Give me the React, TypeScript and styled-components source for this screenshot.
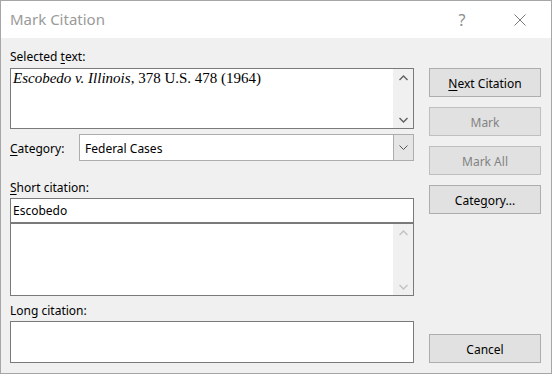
import styled, { createGlobalStyle } from 'styled-components'

const GlobalStyle = createGlobalStyle`
  html, body {
    margin: 0;
    padding: 0;
    background: #ffffff;
  }
  * {
    box-sizing: border-box;
  }
`

const Window = styled.div`
  width: 552px;
  height: 374px;
  border: 1px solid #a6a6a6;
  display: flex;
  flex-direction: column;
  font-family: "Noto Sans", "Open Sans", sans-serif;
  font-size: 12px;
  color: #000;
  overflow: hidden;
`

const TitleBar = styled.div`
  height: 37px;
  flex: none;
  background: #fff;
  display: flex;
  align-items: center;
  padding-left: 9px;
`

const Title = styled.div`
  flex: 1;
  font-size: 15px;
  color: #9a9a9a;
  line-height: 20px;
  margin-top: -2px;
`

const TitleButton = styled.div<{ $w: number }>`
  width: ${p => p.$w}px;
  height: 37px;
  display: flex;
  align-items: center;
  justify-content: center;
  color: #8c8c8c;
  font-size: 16px;
`

const Body = styled.div`
  flex: 1;
  background: #f0f0f0;
  display: flex;
  padding: 0 10px 10px 9px;
  gap: 15px;
`

const LeftCol = styled.div`
  width: 404px;
  display: flex;
  flex-direction: column;
`

const RightCol = styled.div`
  width: 112px;
  display: flex;
  flex-direction: column;
  padding-top: 30px;
  gap: 10px;
`

const Label = styled.div<{ $mt: number }>`
  height: 16px;
  line-height: 19px;
  margin-top: ${p => p.$mt}px;
  white-space: nowrap;
`

const Key = styled.span`
  text-decoration: underline;
  text-underline-offset: 2px;
`

const Box = styled.div<{ $h: number; $mt: number }>`
  height: ${p => p.$h}px;
  margin-top: ${p => p.$mt}px;
  background: #fff;
  border: 1px solid #7a7a7a;
  display: flex;
  flex: none;
`

const BoxText = styled.div`
  flex: 1;
  padding: 2px 2px 0;
  line-height: 20px;
`

const CiteText = styled.div`
  flex: 1;
  padding: 0 2px;
  font-family: "Liberation Serif", "DejaVu Serif", serif;
  font-size: 15px;
  line-height: 19px;
  white-space: nowrap;
`

const Scroll = styled.div<{ $disabled?: boolean }>`
  width: 20px;
  flex: none;
  background: #f0f0f0;
  display: flex;
  flex-direction: column;
  justify-content: space-between;
  align-items: center;
  padding: 6px 0 5px;
  color: ${p => (p.$disabled ? '#c2c2c2' : '#606060')};
`

const CategoryRow = styled.div`
  display: flex;
  align-items: center;
  margin-top: 5px;
  height: 27px;
`

const CategoryLabel = styled.div`
  width: 69px;
  padding-top: 2px;
`

const Combo = styled.div`
  flex: 1;
  height: 27px;
  display: flex;
  background: #fff;
  border: 1px solid #adadad;
`

const ComboText = styled.div`
  flex: 1;
  padding-left: 5px;
  line-height: 27px;
`

const ComboButton = styled.div`
  width: 21px;
  background: #e5e5e5;
  border: 1px solid #adadad;
  margin: -1px -1px -1px 0;
  display: flex;
  align-items: center;
  justify-content: center;
  color: #555;
`

const Button = styled.div<{ $disabled?: boolean }>`
  height: 29px;
  flex: none;
  display: flex;
  align-items: center;
  justify-content: center;
  padding-top: 2px;
  background: #e1e1e1;
  border: 1px solid ${p => (p.$disabled ? '#bfbfbf' : '#adadad')};
  color: ${p => (p.$disabled ? '#838383' : '#000')};
  white-space: nowrap;
`

const CancelButton = styled(Button)`
  margin-top: auto;
`

function Chevron({ up }: { up?: boolean }) {
  return (
    <svg width="9" height="6" viewBox="0 0 9 6" fill="none">
      <path
        d={up ? 'M0.5 5 L4.5 1 L8.5 5' : 'M0.5 1 L4.5 5 L8.5 1'}
        stroke="currentColor"
        strokeWidth="1.4"
      />
    </svg>
  )
}

export default function App() {
  return (
    <>
      <GlobalStyle />
      <Window>
        <TitleBar>
          <Title>Mark Citation</Title>
          <TitleButton $w={54}>?</TitleButton>
          <TitleButton $w={62}>
            <svg width="12" height="12" viewBox="0 0 12 12">
              <path d="M0.5 0.5 L11.5 11.5 M11.5 0.5 L0.5 11.5" stroke="#7a7a7a" strokeWidth="1" />
            </svg>
          </TitleButton>
        </TitleBar>
        <Body>
          <LeftCol>
            <Label $mt={9}>
              Selected <Key>t</Key>ext:
            </Label>
            <Box $h={61} $mt={5}>
              <CiteText>
                <i>Escobedo v. Illinois</i>, 378 U.S. 478 (1964)
              </CiteText>
              <Scroll>
                <Chevron up />
                <Chevron />
              </Scroll>
            </Box>
            <CategoryRow>
              <CategoryLabel>
                <Key>C</Key>ategory:
              </CategoryLabel>
              <Combo>
                <ComboText>Federal Cases</ComboText>
                <ComboButton>
                  <svg width="9" height="5" viewBox="0 0 9 5" fill="none">
                    <path d="M0.5 0.5 L4.5 4.5 L8.5 0.5" stroke="currentColor" strokeWidth="1" />
                  </svg>
                </ComboButton>
              </Combo>
            </CategoryRow>
            <Label $mt={17}>
              <Key>S</Key>hort citation:
            </Label>
            <Box $h={25} $mt={4}>
              <BoxText>Escobedo</BoxText>
            </Box>
            <Box $h={73} $mt={0}>
              <BoxText />
              <Scroll $disabled>
                <Chevron up />
                <Chevron />
              </Scroll>
            </Box>
            <Label $mt={5}>Long citation:</Label>
            <Box $h={42} $mt={4}>
              <BoxText />
            </Box>
          </LeftCol>
          <RightCol>
            <Button>
              <span>
                <Key>N</Key>ext Citation
              </span>
            </Button>
            <Button $disabled>Mark</Button>
            <Button $disabled>Mark All</Button>
            <Button>
              <span>
                Cate<Key>g</Key>ory...
              </span>
            </Button>
            <CancelButton>Cancel</CancelButton>
          </RightCol>
        </Body>
      </Window>
    </>
  )
}
